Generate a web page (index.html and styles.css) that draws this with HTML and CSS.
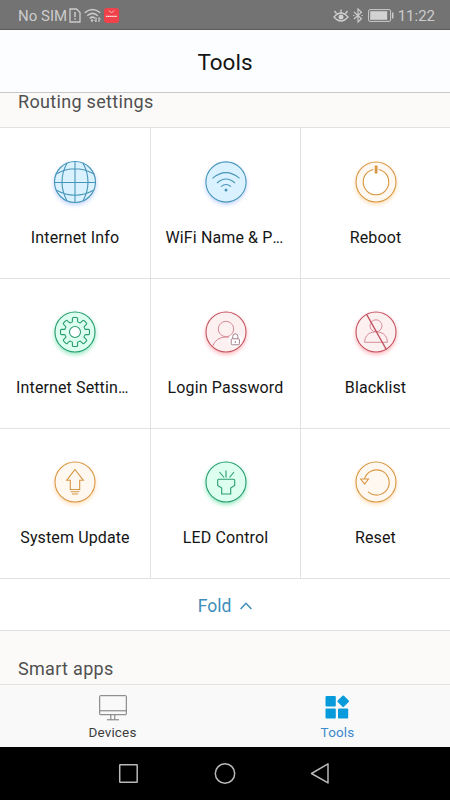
FILE: index.html
```html
<!DOCTYPE html>
<html lang="en">
<head>
<meta charset="utf-8">
<title>Tools</title>
<link rel="stylesheet" href="styles.css">
</head>
<body>
<div class="screen">
  <div class="status">
    <span class="carrier">No SIM</span>
    <svg class="sim" width="12" height="15" viewBox="0 0 12 15"><path d="M1 1h6.500L11 4.500V14H1z" fill="none" stroke="#ccc" stroke-width="1.300"/><path d="M6 4v5M6 10.200v1.600" stroke="#ccc" stroke-width="1.500"/></svg>
    <svg class="wifi" width="17" height="15" viewBox="0 0 17 15" fill="none" stroke="#ccc" stroke-width="1.500"><path d="M.7 4.800Q8.500-1.800 16.300 4.800M3.200 7.700Q8.500 3 13.800 7.700M5.700 10.300Q8.500 8 11 10.300"/><circle cx="8" cy="12.500" r="1.200" fill="#ccc" stroke="none"/><path d="M12 9.500v4.500M15 9.500v4.500" stroke-width="1.200"/><path d="M10.500 12l1.500 2M15 9.500l1.500 2" stroke-width="1"/></svg>
    <svg class="app" width="15" height="15" viewBox="0 0 15 15"><rect width="15" height="15" rx="3" fill="#f0424b"/><path d="M5 2.500Q7.500 6.500 10 2.500" fill="none" stroke="#ffb5b5"/><path d="M2 8.300h11" stroke="#ffdede" stroke-width="1.300" stroke-dasharray="1.500 .3"/></svg>
    <span class="spacer"></span>
    <svg class="eye" width="16" height="14" viewBox="0 0 16 14" fill="none" stroke="#d2d2d2" stroke-width="1.300"><path d="M1 8Q8 0 15 8Q8 16 1 8zM8 3.500V.5M3.500 4.500L1.500 2M12.500 4.500L14.500 2"/><circle cx="8" cy="8" r="2.500" fill="#d2d2d2" stroke="none"/></svg>
    <svg class="bt" width="10" height="15" viewBox="0 0 10 15" fill="none" stroke="#ccc" stroke-width="1.200"><path d="M1 4l7.500 6.700L5 14V1l3.500 3.300L1 11"/><path d="M.2 7.500h1.300M8.500 7.500h1.300"/></svg>
    <svg class="battery" width="26" height="13" viewBox="0 0 26 13"><rect x=".6" y=".6" width="22" height="11.800" rx="1.500" fill="none" stroke="#ccc"/><rect x="2.200" y="2.200" width="17" height="8.600" fill="#d2d2d2"/><path d="M24.700 3.500v6" stroke="#ccc" stroke-width="1.500"/></svg>
    <span class="time">11:22</span>
  </div>
  <header class="header">Tools</header>
  <div class="section section-routing">Routing settings</div>
  <div class="grid">
    <div class="cell"><svg class="icon blue" viewBox="-25 -25 50 50"><circle class="disc" r="20.500"/><path d="M0-20.500v41M-20.500.5h41M-19-8Q0-18.500 19-8M-19 8Q0 18.500 19 8M-8-19Q-18 0-8 19M8-19Q18 0 8 19"/></svg><span class="label">Internet Info</span></div>
    <div class="cell"><svg class="icon blue" viewBox="-25 -25 50 50"><circle class="disc" r="20.100"/><path d="M-13.500-3.700Q0-15 13.500-3.700M-9 1Q0-7 9 1M-5 4.700Q0 .3 5 4.700"/><circle class="solid" cy="8" r="1.500"/></svg><span class="label clipped">WiFi Name &amp; P<span class="dots">...</span></span></div>
    <div class="cell"><svg class="icon orange" viewBox="-25 -25 50 50"><circle class="disc" r="20"/><circle class="hole" r="12.800"/><path d="M-2.700-13h5.400" class="gap"/><rect class="solid" x="-1.300" y="-16.500" width="2.800" height="8" rx=".6"/></svg><span class="label">Reboot</span></div>
    <div class="cell lower"><svg class="icon green" viewBox="-25 -25 50 50"><defs><path id="tooth" d="M-4-9.700Q-2.600-9.500-2.600-11V-13.500Q-2.600-14.500-1.600-14.500H1.600Q2.600-14.500 2.600-13.500V-11Q2.600-9.500 4-9.700"/></defs><circle class="disc" r="20"/><use href="#tooth"/><use href="#tooth" transform="rotate(45)"/><use href="#tooth" transform="rotate(90)"/><use href="#tooth" transform="rotate(135)"/><use href="#tooth" transform="rotate(180)"/><use href="#tooth" transform="rotate(225)"/><use href="#tooth" transform="rotate(270)"/><use href="#tooth" transform="rotate(315)"/><circle class="hole" r="5.500"/></svg><span class="label clipped wide">Internet Settin<span class="dots">...</span></span></div>
    <div class="cell lower"><svg class="icon red" viewBox="-25 -25 50 50"><circle class="disc" r="20"/><g class="fine"><circle cy="-3" r="7.700"/><path d="M-13.500 14.500Q-10 5 0 5Q3 5 5 6"/></g><circle cx="9.300" cy="8.200" r="6.700" fill="#fff" stroke="none"/><g class="lock"><rect x="5.200" y="6.800" width="8.200" height="6" rx="1"/><path d="M6.700 6.500V4.500Q6.700 1.800 9.300 1.800T11.900 4.500V6.500M9.300 9v2"/></g></svg><span class="label">Login Password</span></div>
    <div class="cell lower"><svg class="icon red" viewBox="-25 -25 50 50"><circle class="disc" r="20"/><g class="fine"><circle cy="-6.200" r="6"/><path d="M-11.500 10.300Q-11 2-4 .3Q0-1 4 .3Q11 2 11.500 10.300z"/></g><path class="slash" d="M-9.300-17.500L10.300 17.500"/></svg><span class="label">Blacklist</span></div>
    <div class="cell lower"><svg class="icon orange" viewBox="-25 -25 50 50"><circle class="disc" r="20"/><path d="M0-12.500L8.300-1.700H4.700V7.500H-4.700V-1.700H-8.300zM-4.300 9.700H4.300M-3 12H3"/></svg><span class="label">System Update</span></div>
    <div class="cell lower"><svg class="icon green" viewBox="-25 -25 50 50"><circle class="disc" r="20"/><path d="M-7.500-2.800H7.500Q8.700-2.800 8.700-1.600V3.500L4.700 6V12H-4.300V6L-8.300 3.500V-1.600Q-8.300-2.800-7.500-2.800zM0-11.500V-4.500M-6.500-10L-2-4.500M8-10L3.500-4.500"/></svg><span class="label">LED Control</span></div>
    <div class="cell lower"><svg class="icon orange" viewBox="-25 -25 50 50"><circle class="disc" r="20"/><path d="M-11.500-3A12.600 12.600 0 1 1-8 9.700M-15.300-3H-7.500L-11.400 2.200z"/></svg><span class="label">Reset</span></div>
  </div>
  <div class="fold"><span>Fold</span><svg width="12" height="8" viewBox="0 0 12 8"><path d="M.6 7L6 1.300L11.400 7" fill="none" stroke="#3d8ebb" stroke-width="1.500"/></svg></div>
  <div class="section section-apps">Smart apps</div>
  <div class="tabs">
    <div class="tab"><svg width="28" height="26" viewBox="0 0 28 26" fill="none" stroke="#777" stroke-width="1"><rect x=".7" y=".7" width="26.600" height="19" rx=".5"/><path d="M1 15.800H27M11.800 20v4.500M15.800 20v4.500M8 24.800H20"/></svg><span>Devices</span></div>
    <div class="tab active"><svg width="28" height="26" viewBox="0 0 28 26" fill="#089bdc"><rect x="1.500" y="1" width="10.300" height="10.500" rx="1"/><rect x="1.500" y="13.500" width="10.300" height="10" rx="1"/><rect x="14" y="13.500" width="10.200" height="10" rx="1"/><rect x="14.800" y="1.900" width="8.800" height="8.800" rx="1" transform="rotate(45 19.200 6.300)"/></svg><span>Tools</span></div>
  </div>
  <div class="nav">
    <svg width="22" height="22" viewBox="0 0 22 22"><rect x="1.700" y="1.700" width="17.500" height="17.500" rx=".5"/></svg>
    <svg width="22" height="22" viewBox="0 0 22 22"><circle cx="11" cy="10.500" r="9.700"/></svg>
    <svg width="22" height="22" viewBox="0 0 22 22"><path d="M18 .9V19.900L1.500 10.500z" stroke-linejoin="round"/></svg>
  </div>
</div>
</body>
</html>
```
FILE: styles.css
```css
* { box-sizing: border-box; }
body { margin: 0; font-family: Roboto, "Liberation Sans", sans-serif; color: #151515; }
.screen { width: 450px; height: 800px; display: flex; flex-direction: column; background: #fff; overflow: hidden; }
.status { height: 30px; flex: none; display: flex; align-items: center; padding: 2px 15px 0 18px; background: #737373; border-bottom: 1px solid #5d5d5d; color: #ccc; font-size: 15px; }
.status svg { flex: none; }
.carrier { width: 49px; white-space: nowrap; }
.sim { margin-left: 2px; }
.wifi { margin-left: 3px; }
.app { margin-left: 3px; }
.spacer { flex: 1; }
.bt { margin-left: 4px; }
.battery { margin: 0 4px 0 5px; }
.header { height: 63px; flex: none; display: flex; align-items: center; justify-content: center; padding-top: 2px; background: #fcfdff; border-bottom: 1px solid #c5c7c9; font-size: 22.5px; }
.section { flex: none; display: flex; padding-left: 18px; background: #fbfaf8; border-bottom: 1px solid #e2e2e2; color: #505050; font-size: 18px; line-height: 20px; letter-spacing: .32px; }
.section-routing { height: 35px; line-height: 18px; }
.grid { flex: none; display: grid; grid-template-columns: 151px 150px 149px; grid-template-rows: 151px 150px 150px; }
.cell { display: flex; flex-direction: column; align-items: center; padding-top: 28.5px; border-right: 1px solid #e2e2e2; border-bottom: 1px solid #e2e2e2; }
.cell:nth-child(3n) { border-right: 0; }
.lower { padding-top: 28px; }
.icon { width: 50px; height: 50px; overflow: visible; fill: none; stroke: var(--line); stroke-width: 1.1; }
.disc { fill: var(--tint); filter: drop-shadow(0 2px 2px var(--glow)); }
.solid { fill: var(--line); stroke: none; }
.hole { fill: #fff; }
.gap { stroke: var(--tint); stroke-width: 2; }
.blue { --line: #4795b8; --tint: #daf2ff; --glow: #c3d5fa; }
.orange { --line: #d89743; --tint: #fff8f1; --glow: #ffdfb8; }
.green { --line: #299b74; --tint: #dcfff0; --glow: #91e8bd; }
.red { --line: #c45461; --tint: #fcf0f0; --glow: #ffb7bb; }
.fine { stroke: #d98c97; stroke-width: 1; }
.lock { stroke: #98707a; stroke-width: .9; }
.slash { stroke-width: 1.5; }
.label { margin-top: 21px; font-size: 16px; line-height: 20px; letter-spacing: .12px; white-space: nowrap; }
.clipped { padding-right: 3px; }
.wide { padding-right: 6px; }
.dots { letter-spacing: -.9px; }
.fold { height: 52px; flex: none; display: flex; align-items: center; justify-content: center; gap: 9px; padding-top: 2px; border-bottom: 1px solid #e2e2e2; color: #3d8ebb; font-size: 17.5px; }
.section-apps { height: 54px; padding-top: 28px; }
.tabs { height: 62px; flex: none; display: grid; grid-template-columns: 1fr 1fr; background: #f9f9fa; }
.tab { display: flex; flex-direction: column; align-items: center; padding-top: 10px; color: #3d3d3d; font-size: 13.5px; line-height: 18px; letter-spacing: .15px; }
.tab span { margin-top: 2px; }
.active { color: #3d89cc; }
.nav { flex: 1; display: flex; justify-content: center; align-items: center; gap: 74px; background: #000; }
.nav svg { fill: none; stroke: #b8b8b8; stroke-width: 1.5; }
```
